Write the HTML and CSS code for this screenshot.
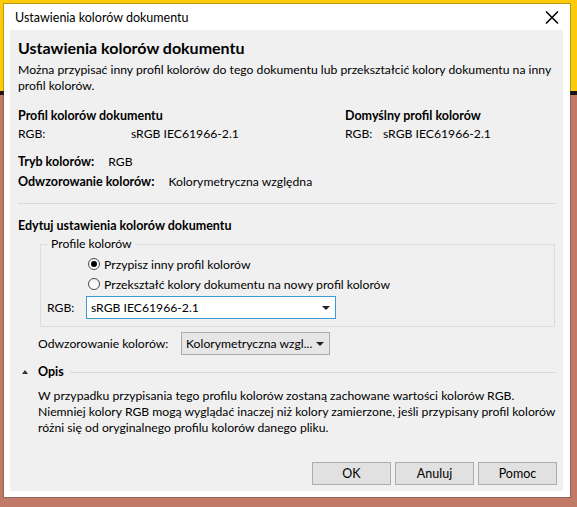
FILE: index.html
```html
<!DOCTYPE html>
<html lang="pl">
<head>
<meta charset="utf-8">
<title>Ustawienia kolorów dokumentu</title>
<link rel="stylesheet" href="styles.css">
</head>
<body>
<div class="window">
  <div class="titlebar">
    <span class="title">Ustawienia kolorów dokumentu</span>
    <svg class="close" width="14" height="13" viewBox="0 0 14 13"><path d="M1 0.5 L13 12.5 M13 0.5 L1 12.5" stroke="#000" stroke-width="1.5" fill="none"/></svg>
  </div>
  <div class="content">
    <h1 class="heading">Ustawienia kolorów dokumentu</h1>
    <p class="intro">Można przypisać inny profil kolorów do tego dokumentu lub przekształcić kolory dokumentu na inny<br>profil kolorów.</p>

    <div class="profiles">
      <div class="col col-doc">
        <div class="bold">Profil kolorów dokumentu</div>
        <div class="kv"><span class="k-doc">RGB:</span><span>sRGB IEC61966-2.1</span></div>
      </div>
      <div class="col col-def">
        <div class="bold">Domyślny profil kolorów</div>
        <div class="kv"><span class="k-def">RGB:</span><span>sRGB IEC61966-2.1</span></div>
      </div>
    </div>

    <div class="info info-first"><span class="bold">Tryb kolorów:</span><span>RGB</span></div>
    <div class="info"><span class="bold">Odwzorowanie kolorów:</span><span>Kolorymetryczna względna</span></div>

    <div class="separator"></div>

    <div class="bold section">Edytuj ustawienia kolorów dokumentu</div>

    <fieldset class="group">
      <legend class="legend">Profile kolorów</legend>
      <div class="radio-row first"><span class="radio checked"></span><span>Przypisz inny profil kolorów</span></div>
      <div class="radio-row"><span class="radio"></span><span>Przekształć kolory dokumentu na nowy profil kolorów</span></div>
      <div class="select-row">
        <span class="select-label">RGB:</span>
        <div class="select select-focus"><span>sRGB IEC61966-2.1</span><span class="arrow"></span></div>
      </div>
    </fieldset>

    <div class="intent-row">
      <span class="intent-label">Odwzorowanie kolorów:</span>
      <div class="select select-btn"><span>Kolorymetryczna wzgl...</span><span class="arrow"></span></div>
    </div>

    <div class="expander">
      <span class="tri-up"></span>
      <span class="bold">Opis</span>
      <span class="exp-line"></span>
    </div>

    <p class="desc">W przypadku przypisania tego profilu kolorów zostaną zachowane wartości kolorów RGB.<br>Niemniej kolory RGB mogą wyglądać inaczej niż kolory zamierzone, jeśli przypisany profil kolorów<br>różni się od oryginalnego profilu kolorów danego pliku.</p>

    <div class="buttons">
      <button class="btn">OK</button>
      <button class="btn">Anuluj</button>
      <button class="btn">Pomoc</button>
    </div>
  </div>
</div>
</body>
</html>
```

FILE: styles.css
```css
html, body {
  margin: 0;
  padding: 0;
}
body {
  width: 577px;
  height: 507px;
  overflow: hidden;
  background: linear-gradient(to bottom, #fecb0a 0, #fecb0a 91px, #1b1410 91px, #1b1410 95px, #c27a68 95px, #c27a68 100%);
  font-family: Lato, "Noto Sans", sans-serif;
  font-size: 12.2px;
  color: #000;
  padding-top: 4px;
  box-sizing: border-box;
}
.window {
  margin-left: 4px;
  width: 566px;
  background: #ffffff;
  box-shadow: 0 0 0 1px rgba(60, 60, 60, 0.35);
  padding: 0 7px 6px 6px;
  box-sizing: border-box;
}
.titlebar {
  height: 26px;
  display: flex;
  align-items: center;
  justify-content: space-between;
}
.title {
  margin-left: 5px;
  line-height: 16px;
  margin-top: 1px;
  font-size: 12.5px;
}
.close {
  margin-right: 4px;
  margin-top: 1px;
}
.content {
  background: #f0f0f0;
  padding: 8px 8px 6px 8px;
}
.heading {
  margin: 0;
  font-size: 16px;
  line-height: 20px;
  font-weight: 700;
}
.intro {
  margin: 4px 0 0 0;
  line-height: 16px;
  white-space: nowrap;
}
.bold {
  font-weight: 700;
  font-size: 12.5px;
}
.profiles {
  display: flex;
  margin-top: 13px;
  line-height: 18px;
}
.col-doc {
  width: 327px;
}
.kv {
  display: flex;
}
.k-doc {
  width: 113px;
}
.k-def {
  width: 38px;
}
.info {
  display: flex;
  align-items: baseline;
  gap: 14px;
  line-height: 18px;
  margin-top: 2px;
}
.info-first {
  margin-top: 10px;
}
.separator {
  height: 1px;
  background: #d8d8d8;
  margin-top: 12px;
}
.section {
  margin-top: 13px;
  line-height: 18px;
}
.group {
  margin: 1px 0 0 22px;
  padding: 2px 0 7px 0;
  border: 1px solid #dcdcdc;
  min-width: 0;
}
.legend {
  margin-left: 7px;
  padding: 0 3px;
  line-height: 16px;
}
.radio-row {
  display: flex;
  align-items: center;
  height: 20px;
  padding-left: 47px;
  gap: 4px;
}
.radio {
  width: 12px;
  height: 12px;
  border-radius: 50%;
  border: 1px solid #4a4a4a;
  background: linear-gradient(to bottom, #f2f2f2, #ffffff);
  box-sizing: border-box;
  display: flex;
  align-items: center;
  justify-content: center;
}
.radio.checked::after {
  content: "";
  width: 6px;
  height: 6px;
  border-radius: 50%;
  background: #000;
}
.select-row {
  display: flex;
  align-items: center;
  margin-top: 2px;
  padding-left: 6px;
}
.select-label {
  width: 39px;
}
.select {
  height: 23px;
  box-sizing: border-box;
  display: flex;
  align-items: center;
  justify-content: space-between;
  padding: 0 5px 0 4px;
  white-space: nowrap;
}
.select-focus {
  width: 250px;
  background: #ffffff;
  border: 1px solid #3c9ad8;
}
.select-btn {
  width: 149px;
  background: #e6e6e6;
  border: 1px solid #acacac;
}
.arrow {
  width: 0;
  height: 0;
  border-left: 4px solid transparent;
  border-right: 4px solid transparent;
  border-top: 4px solid #222;
}
.intent-row {
  display: flex;
  align-items: center;
  margin-top: 5px;
  padding-left: 20px;
}
.intent-label {
  width: 143px;
}
.expander {
  display: flex;
  align-items: center;
  margin-top: 9px;
  line-height: 16px;
  padding-left: 4px;
}
.tri-up {
  width: 0;
  height: 0;
  border-left: 3px solid transparent;
  border-right: 3px solid transparent;
  border-bottom: 4px solid #333;
  margin-right: 10px;
}
.exp-line {
  flex: 1;
  height: 1px;
  background: #d8d8d8;
  margin-left: 6px;
}
.desc {
  margin: 8px 0 0 20px;
  line-height: 16px;
  white-space: nowrap;
}
.buttons {
  display: flex;
  justify-content: flex-end;
  gap: 4px;
  margin-top: 26px;
  margin-right: -2px;
}
.btn {
  width: 79px;
  height: 23px;
  background: #e1e1e1;
  border: 1px solid #adadad;
  font-family: Lato, "Noto Sans", sans-serif;
  font-size: 12.5px;
  color: #000;
  padding: 0;
}
```
